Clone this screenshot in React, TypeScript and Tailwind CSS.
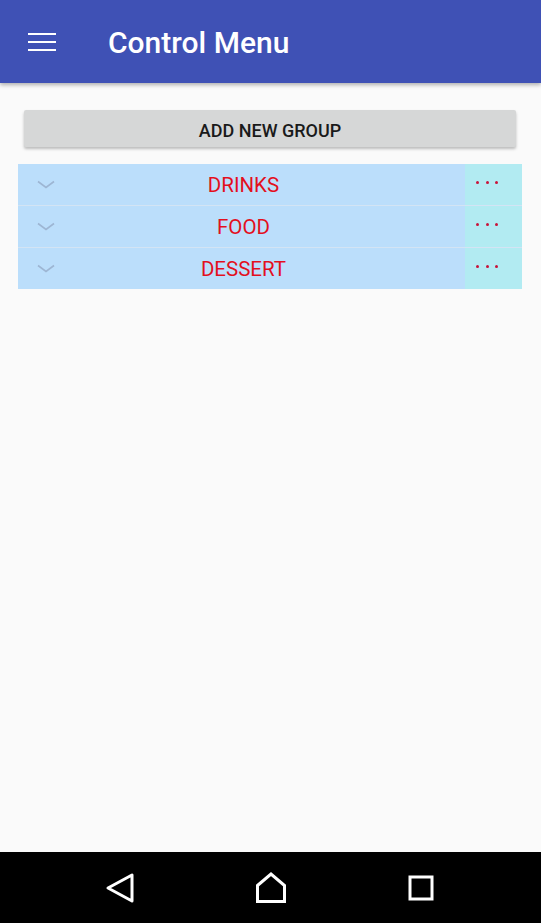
import { useState } from "react";

const groups = ["DRINKS", "FOOD", "DESSERT"];

const Chevron = () => (
  <svg width="18" height="9" viewBox="0 0 18 9" fill="none">
    <path d="M1 1.5 L9 7.5 L17 1.5" stroke="#9db6d3" strokeWidth="1.6" />
  </svg>
);

const GroupRow = ({ name, last }: { name: string; last: boolean }) => {
  return (
    <div className={`flex ${last ? "h-[41px]" : "h-[42px] border-b border-[#d3e4f4]"}`}>
      <div className="relative flex flex-1 items-center justify-center bg-[#bbdefb] pl-[4px]">
        <span className="absolute left-[19px] top-[16px]">
          <Chevron />
        </span>
        <span className="pt-[1px] text-[20.5px] text-[#e3101e]">{name}</span>
      </div>
      <div className="flex w-[57px] items-start justify-center gap-[6.5px] bg-[#b2ebf2] pt-[17px] pr-[13px]">
        <span className="h-[3px] w-[3px] rounded-full bg-[#c8143a]" />
        <span className="h-[3px] w-[3px] rounded-full bg-[#c8143a]" />
        <span className="h-[3px] w-[3px] rounded-full bg-[#c8143a]" />
      </div>
    </div>
  );
};

const App = () => {
  const [items] = useState(groups);

  return (
    <div
      className="flex h-[923px] w-[541px] flex-col bg-[#fafafa]"
      style={{ fontFamily: "Roboto, 'Noto Sans', sans-serif" }}
    >
      {/* toolbar */}
      <div className="relative z-10 flex h-[83px] items-center bg-[#3f51b5] shadow-[0_2px_4px_rgba(0,0,0,0.3)]">
        <button className="ml-[28px] flex w-[28px] flex-col gap-[5.5px] pt-[1px]">
          <span className="h-[2.5px] w-full bg-white" />
          <span className="h-[2.5px] w-full bg-white" />
          <span className="h-[2.5px] w-full bg-white" />
        </button>
        <h1 className="ml-[52px] pt-[1px] text-[30px] font-medium text-white">Control Menu</h1>
      </div>

      <div className="flex flex-1 flex-col pl-[18px] pr-[19px] pt-[27px]">
        <button className="mx-[6px] h-[37px] rounded-[2px] bg-[#d6d7d7] pt-[3px] text-[18px] font-medium text-[#1a1a1a] shadow-[0_2px_3px_rgba(0,0,0,0.25)]">
          ADD NEW GROUP
        </button>

        <div className="mt-[17px] flex flex-col">
          {items.map((g, i) => (
            <GroupRow key={g} name={g} last={i === items.length - 1} />
          ))}
        </div>
      </div>

      {/* system nav bar */}
      <div className="flex h-[71px] items-center justify-center gap-[118px] bg-black">
        <svg width="32" height="32" viewBox="0 0 32 32" fill="none">
          <path d="M3 16 L27 3 L27 29 Z" stroke="white" strokeWidth="3" strokeLinejoin="round" />
        </svg>
        <svg width="32" height="32" viewBox="0 0 32 32" fill="none">
          <path d="M2.5 13.5 L16 2 L29.5 13.5 L29.5 29.5 L2.5 29.5 Z" stroke="white" strokeWidth="3" strokeLinejoin="miter" />
        </svg>
        <svg width="32" height="32" viewBox="0 0 32 32" fill="none">
          <rect x="5" y="5" width="22" height="22" stroke="white" strokeWidth="3" />
        </svg>
      </div>
    </div>
  );
};

export default App;
